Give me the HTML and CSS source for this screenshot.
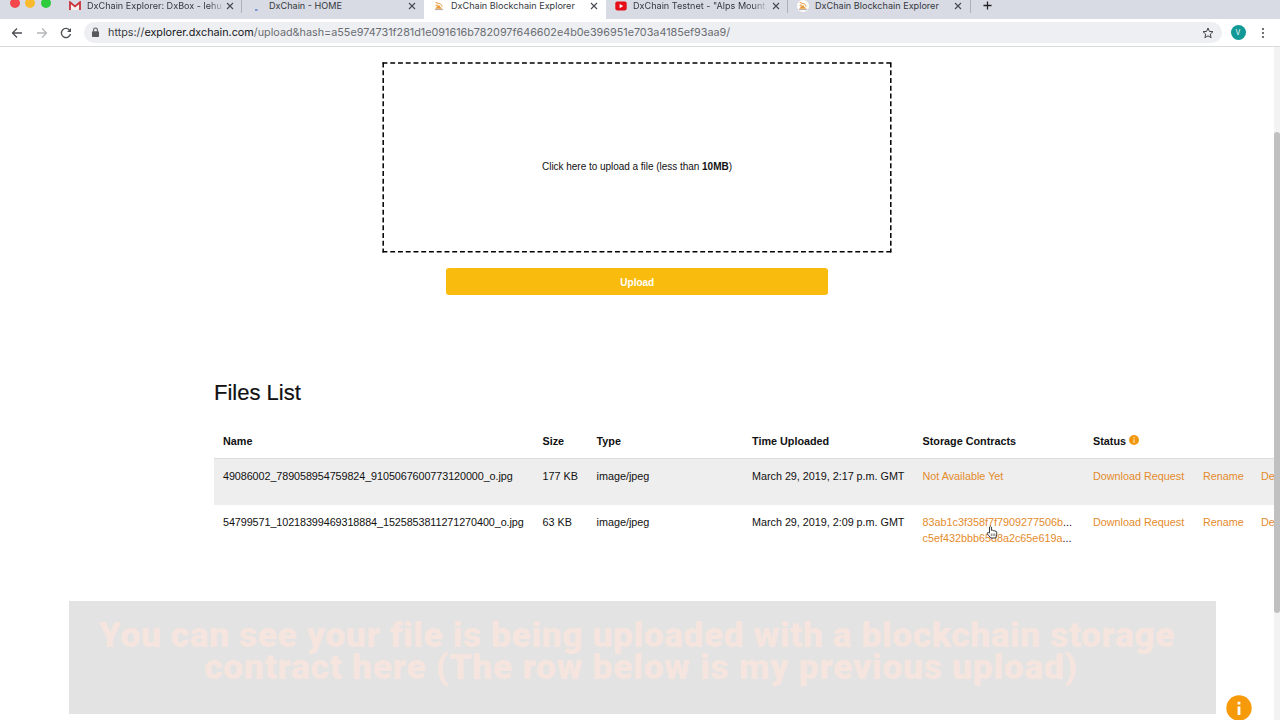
FILE: index.html
```html
<!DOCTYPE html>
<html lang="en">
<head>
<meta charset="utf-8">
<title>DxChain Blockchain Explorer</title>
<link rel="stylesheet" href="styles.css">
</head>
<body>
<svg class="defs" width="0" height="0">
  <symbol id="close" viewBox="0 0 10 10"><path d="M2 2 8 8M8 2 2 8" stroke="#45484c" stroke-width="1.1" fill="none"/></symbol>
  <symbol id="dx" viewBox="0 0 12 10"><path d="M2.6 1.7H4.6M3.6 3.4C5.4 1.8 8.8 2.2 9 5.8M2.6 4.6H4.4" stroke="#eb9a3c" stroke-width="1" fill="none"/><path d="M2.2 7.8 4.8 4.6 6.4 4.2 7.4 6 9.4 7.8Z" fill="#eb9a3c"/><path d="M2 8.6H10" stroke="#9a9187" stroke-width=".8"/></symbol>
</svg>
<div class="window">
  <header class="chrome">
    <div class="tabstrip">
      <div class="lights"><i class="light red"></i><i class="light yellow"></i><i class="light green"></i></div>
      <div class="tab tab-mail">
        <svg class="fav" viewBox="0 0 12 10"><path d="M1 9V1.2L6 5.4 11 1.2V9" fill="#f4f0f0" stroke="#c9343a" stroke-width="1.8"/></svg>
        <span class="title fade">DxChain Explorer: DxBox - lehu</span><svg class="x"><use href="#close"/></svg>
      </div>
      <div class="tab tab-home">
        <svg class="fav" viewBox="0 0 12 10"><rect x="3" y="8.4" width="2.6" height="1.2" fill="#3c6bd0"/></svg>
        <span class="title">DxChain - HOME</span><svg class="x"><use href="#close"/></svg>
      </div>
      <div class="tab tab-active">
        <svg class="fav"><use href="#dx"/></svg>
        <span class="title">DxChain Blockchain Explorer</span><svg class="x"><use href="#close"/></svg>
      </div>
      <div class="tab tab-video">
        <svg class="fav" viewBox="0 0 12 10"><rect x=".3" y=".6" width="11.4" height="8.8" rx="1.8" fill="#e60d18"/><path d="M4.6 3 8.2 5.1 4.6 7.2Z" fill="#fff"/></svg>
        <span class="title fade">DxChain Testnet - "Alps Mount</span><svg class="x"><use href="#close"/></svg>
      </div>
      <div class="tab tab-last">
        <span class="disc"><svg class="fav"><use href="#dx"/></svg></span>
        <span class="title">DxChain Blockchain Explorer</span><svg class="x"><use href="#close"/></svg>
      </div>
      <svg class="plus" viewBox="0 0 10 10"><path d="M5 .5V9.5M.5 5H9.5" stroke="#202124" stroke-width="1.4"/></svg>
    </div>
    <div class="toolbar">
      <svg class="nav" viewBox="0 0 12 12"><path d="M11 6H1.5M6 1.5 1.5 6 6 10.5" fill="none" stroke="#4d5054" stroke-width="1.3"/></svg>
      <svg class="nav" viewBox="0 0 12 12"><path d="M1 6H10.5M6 1.5 10.5 6 6 10.5" fill="none" stroke="#b4b6b9" stroke-width="1.3"/></svg>
      <svg class="nav" viewBox="0 0 12 12"><path d="M9.8 3.4A4.6 4.6 0 1 0 10.5 7" fill="none" stroke="#4d5054" stroke-width="1.3"/><path d="M11 1V5H7Z" fill="#4d5054"/></svg>
      <div class="address">
        <svg class="lock" viewBox="0 0 8 10"><rect x=".8" y="3.8" width="6.4" height="5.4" rx=".7" fill="#55585c"/><path d="M2.3 4V2.6a1.7 1.7 0 0 1 3.4 0V4" fill="none" stroke="#55585c"/></svg>
        <span class="url"><i>https://</i><b>explorer.dxchain.com</b>/upload&amp;hash=a55e974731f281d1e091616b782097f646602e4b0e396951e703a4185ef93aa9/</span>
        <svg class="star" viewBox="0 0 12 12"><path d="M6 1 7.4 4.4 11 4.7 8.3 7.1 9.1 10.7 6 8.8 2.9 10.7 3.7 7.1 1 4.7 4.6 4.4Z" fill="none" stroke="#3f4246"/></svg>
      </div>
      <span class="avatar">V</span>
      <svg class="dots" viewBox="0 0 4 12"><g fill="#4d5054"><circle cx="2" cy="2" r="1.1"/><circle cx="2" cy="6" r="1.1"/><circle cx="2" cy="10" r="1.1"/></g></svg>
    </div>
  </header>
  <main class="page">
    <div class="drop">
      <svg class="dash" viewBox="0 0 510 191"><path d="M.5 1H509.5M.5 189.8H509.5" stroke-dasharray="4.9 2.85"/><path d="M1.2 .5V190.5M508.8 .5V190.5" stroke-dasharray="4.9 2.85"/></svg>
      <span class="drop-text">Click here to upload a file (less than <b>10MB</b>)</span>
    </div>
    <button class="upload">Upload</button>
    <section class="files">
      <h2>Files List</h2>
      <table>
        <colgroup><col class="c1"><col class="c2"><col class="c3"><col class="c4"><col class="c5"><col class="c6"><col class="c7"><col class="c8"></colgroup>
        <thead><tr><th>Name</th><th>Size</th><th>Type</th><th>Time Uploaded</th><th>Storage Contracts</th><th>Status <svg class="hint" viewBox="0 0 10 10"><circle cx="5" cy="5" r="5" fill="#f2980f"/><path d="M5 2V3.2M5 4.2V8" stroke="#ffe7bd" stroke-width="1.1"/></svg></th><th></th><th></th></tr></thead>
        <tbody>
          <tr class="shade"><td class="name">49086002_789058954759824_9105067600773120000_o.jpg</td><td>177 KB</td><td>image/jpeg</td><td class="time">March 29, 2019, 2:17 p.m. GMT</td><td><a>Not Available Yet</a></td><td><a>Download Request</a></td><td><a>Rename</a></td><td><a>Delete</a></td></tr>
          <tr><td class="name">54799571_10218399469318884_1525853811271270400_o.jpg</td><td>63 KB</td><td>image/jpeg</td><td class="time">March 29, 2019, 2:09 p.m. GMT</td><td><div><a>83ab1c3f358f7f7909277506b</a>...</div><div><a>c5ef432bbb65d8a2c65e619a</a>...</div></td><td><a>Download Request</a></td><td><a>Rename</a></td><td><a>Delete</a></td></tr>
        </tbody>
      </table>
    </section>
  </main>
  <div class="scroll"><div class="thumb"></div></div>
  <svg class="cursor" viewBox="0 0 12 14"><path d="M3.5 8V2Q4.5.5 5.4 2V5.3Q6.5 4.6 7.2 5.7 8.2 5 8.9 6.1 10.4 5.7 10.7 7.2V9.7L9.7 13H4.8L1.2 8.8Q1.1 7.2 2.6 7.7Z" fill="#fff" stroke="#222" stroke-width=".9"/><path d="M5.3 8.5V11M7.1 8.5V11M8.8 8.5V11" stroke="#222" stroke-width=".6"/></svg>
  <div class="caption"><div class="l1">You can see your file is being uploaded with a blockchain storage</div><div class="l2">contract here (The row below is my previous upload)</div></div>
  <svg class="info" viewBox="0 0 26 26"><circle cx="13" cy="13" r="12.7" fill="#f79a09"/><path d="M13 6.7V9.4M13 11.5V20" stroke="#fff" stroke-width="2.8"/></svg>
</div>
</body>
</html>
```
FILE: styles.css
```css
* { box-sizing: border-box; }
body { margin: 0; background: #fff; font-family: "Liberation Sans", Arial, sans-serif; color: #111; }
svg { display: block; flex: none; }
.defs { position: absolute; }
.window { position: relative; width: 1280px; height: 720px; overflow: hidden; }
.chrome { height: 47px; border-bottom: 1px solid #d9d9dc; font-family: Inter, sans-serif; }
.tabstrip { display: flex; height: 19px; background: #d8dbe4; }
.lights { display: flex; gap: 5.5px; width: 59px; padding: 0 0 0 9.5px; flex: none; }
.light { width: 10px; height: 10px; margin-top: -2px; border-radius: 50%; flex: none; }
.red { background: #f4474b; }
.yellow { background: #f9bb2d; }
.green { background: #2bcb3b; }
.tab { display: flex; height: 19px; font-size: 9.1px; line-height: 12px; color: #35383d; flex: none; }
.title { white-space: nowrap; flex: none; height: 14px; }
.fade { -webkit-mask-image: linear-gradient(90deg, #000 90%, rgba(0,0,0,.2)); mask-image: linear-gradient(90deg, #000 90%, rgba(0,0,0,.2)); }
.fav { width: 12px; height: 10px; margin-top: 1px; }
.x { width: 10px; height: 10px; margin-left: auto; margin-top: 1px; }
.tab-mail { width: 183px; padding: 0 6px 0 10px; border-right: 1px solid #aeb1b9; height: 13px; }
.tab-mail .title { margin-left: 6px; }
.tab-home { width: 182px; padding: 0 7px 0 10px; }
.tab-home .title { margin-left: 5px; }
.tab-active { width: 182px; padding: 0 7px 0 9px; background: #fff; }
.tab-active .title { margin-left: 6px; }
.tab-video { width: 182px; padding: 0 6px 0 9px; height: 13px; border-right: 1px solid #aeb1b9; }
.tab-video .title { margin-left: 6px; }
.tab-last { width: 183px; padding: 0 7px 0 9px; height: 13px; border-right: 1px solid #aeb1b9; }
.tab-last .title { margin-left: 6px; }
.disc { width: 12px; height: 12px; background: #fff; border-radius: 50%; }
.plus { width: 9px; height: 9px; margin: 1px 0 0 12px; }
.toolbar { display: flex; align-items: center; height: 27px; padding-left: 11px; }
.nav { width: 12px; height: 12px; margin-right: 12.5px; }
.address { display: flex; align-items: center; width: 1138px; height: 21px; margin-left: -1px; padding: 0 8px 0 7.5px; border-radius: 11px; background: #eeeff2; }
.lock { width: 9px; height: 11px; }
.url { margin: -1px 0 0 8px; font-size: 10.8px; color: #6a6d72; white-space: nowrap; }
.url i { font-style: normal; color: #3c3e42; }
.url b { font-weight: 400; color: #151619; }
.star { width: 12px; height: 12px; margin-left: auto; }
.avatar { width: 15px; height: 15px; margin-left: 9px; border-radius: 50%; background: #109996; color: #fff; font-size: 7px; line-height: 15px; text-align: center; }
.dots { width: 4px; height: 12px; margin-left: 15px; }
.page { display: flex; flex-direction: column; width: 1274px; height: 673px; overflow: hidden; padding-top: 15px; }
.drop { position: relative; display: flex; align-items: center; justify-content: center; width: 510px; height: 191px; margin-left: 382px; padding-top: 18px; font-size: 10px; letter-spacing: -.03px; flex: none; }
.dash { position: absolute; inset: 0; width: 510px; height: 191px; fill: none; stroke: #000; stroke-width: 1.5; }
.upload { width: 382.5px; height: 27px; margin: 14.5px 0 0 445.5px; padding: 2px 0 0 1px; border: 0; border-radius: 3px; background: #f9bb0d; color: #fff; font: 700 10px "Liberation Sans", Arial, sans-serif; flex: none; }
.files { padding-left: 214px; margin-top: 84px; }
h2 { margin: 0; height: 45px; font-weight: 400; font-size: 22px; line-height: 28px; color: #111; -webkit-text-stroke: .2px #111; }
table { width: 1116px; table-layout: fixed; border-collapse: collapse; font-size: 10.8px; line-height: 15.5px; }
.c1 { width: 319.5px; } .c2 { width: 54px; } .c3 { width: 155.5px; } .c4 { width: 170.5px; } .c5 { width: 170.5px; } .c6 { width: 110px; } .c7 { width: 58px; } .c8 { width: 78px; }
th, td { padding: 10px 0 0 9px; vertical-align: top; text-align: left; white-space: nowrap; }
th { height: 35px; padding-top: 10.5px; border-bottom: 1px solid #dcdcdc; }
td { height: 46.5px; }
.name { letter-spacing: -.08px; }
.time { letter-spacing: -.02px; }
.shade { background: #eee; }
a { color: #e48b2b; }
.hint { display: inline-block; width: 10px; height: 10px; vertical-align: 0; }
.scroll { position: absolute; left: 1274px; top: 47px; width: 6px; height: 673px; background: #f3f3f3; }
.thumb { height: 481px; margin-top: 85px; border-radius: 3px; background: #c0c0c0; }
.cursor { position: absolute; left: 986px; top: 525px; width: 12px; height: 14px; }
.caption { position: absolute; left: 69px; top: 601px; width: 1147px; height: 113px; padding-top: 18px; background: #e3e3e3; color: #f6e5df; font: 900 35.5px/32px Roboto, sans-serif; text-align: center; white-space: nowrap; }
.l1 { margin-left: -11px; letter-spacing: .5px; }
.l2 { margin-left: -3px; letter-spacing: .66px; }
.info { position: absolute; left: 1226px; top: 695px; width: 26px; height: 26px; }
```
